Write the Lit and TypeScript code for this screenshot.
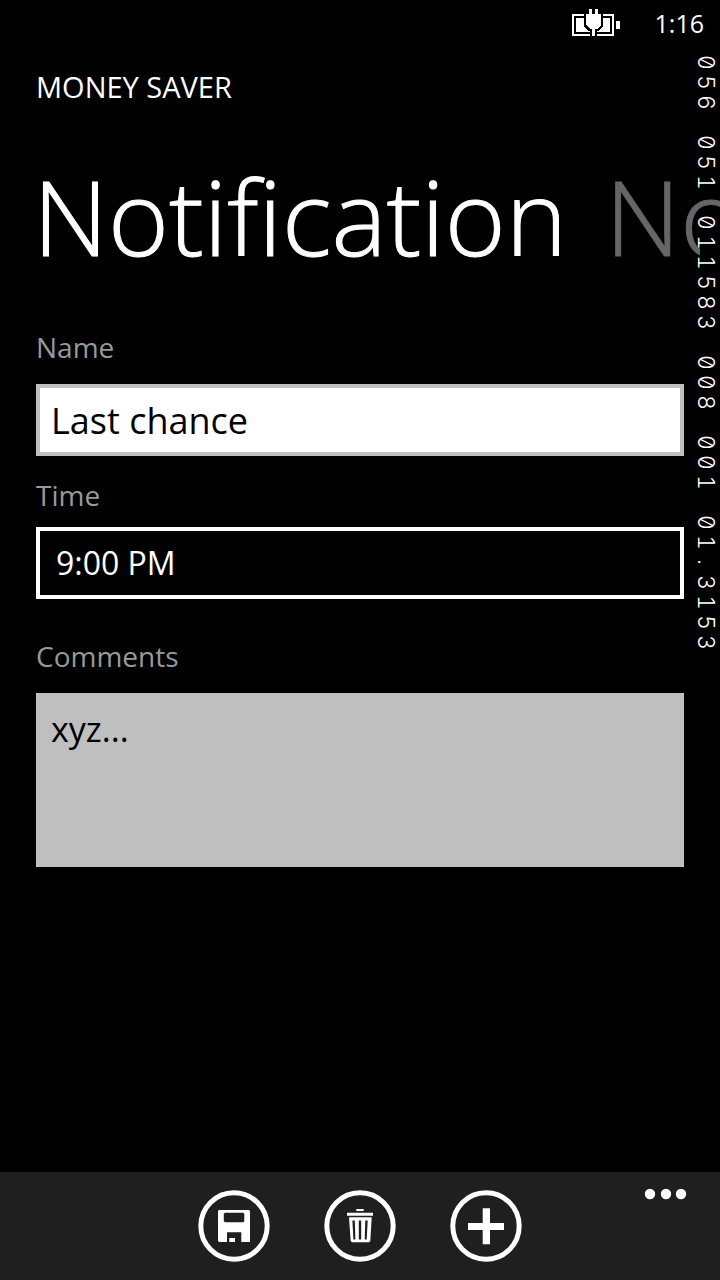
import { LitElement, html, css, svg } from "lit";
import { customElement, state } from "lit/decorators.js";

@customElement("frame-counters")
class FrameCounters extends LitElement {
  static styles = css`
    :host {
      display: flex;
      flex-direction: column;
      gap: 20px;
      font: 300 23px/28px Inter, sans-serif;
      font-feature-settings: "zero", "tnum";
      color: #fff;
    }
    .group {
      display: flex;
      flex-direction: column;
      background: linear-gradient(to left, #000 20px, transparent 20px);
    }
    .digit {
      width: 28px;
      height: 20px;
      writing-mode: vertical-rl;
      text-orientation: sideways;
      text-align: center;
    }
  `;
  private groups = ["056", "051", "011583", "008", "001", "01.3153"];

  render() {
    return this.groups.map(
      (g) => html`<span class="group">${[...g].map((c) => html`<span class="digit">${c}</span>`)}</span>`
    );
  }
}

@customElement("app-root")
class AppRoot extends LitElement {
  static styles = css`
    :host {
      display: flex;
      flex-direction: column;
      position: relative;
      min-height: 100vh;
      overflow: hidden;
      background: #000;
      color: #fff;
      font-family: "Open Sans", "Noto Sans", sans-serif;
    }
    .status {
      display: flex;
      justify-content: flex-end;
      align-items: center;
      gap: 34px;
      height: 48px;
      padding: 0 16px;
      font-size: 25px;
      line-height: 46px;
    }
    .battery {
      display: block;
    }
    .clock {
      align-self: flex-start;
    }
    .app-name {
      margin: 0;
      padding: 19px 36px 0;
      font-size: 29px;
      line-height: 40px;
      font-weight: 400;
    }
    .pivots {
      display: flex;
      gap: 38px;
      padding: 39px 33px 0;
      font-size: 104px;
      line-height: 140px;
      font-weight: 300;
      font-variant-ligatures: none;
      -webkit-text-stroke: 1px currentColor;
      white-space: nowrap;
    }
    .pivot {
      margin: 0;
      font: inherit;
    }
    .next {
      color: #666;
      text-decoration: none;
    }
    .form {
      flex: 1;
      display: flex;
      flex-direction: column;
      padding: 41px 36px 36px;
    }
    .label {
      font-size: 28px;
      line-height: 40px;
      color: #999;
    }
    .field {
      box-sizing: border-box;
      width: 100%;
      height: 72px;
      margin: 17px 0 19px;
      padding: 0 11px;
      border: 4px solid #bfbfbf;
      border-radius: 0;
      outline: none;
      background: #fff;
      color: #000;
      font: 400 36px/48px "Open Sans", sans-serif;
      text-align: left;
    }
    .picker {
      margin: 12px 0 37px;
      padding: 0 16px;
      border-color: #fff;
      background: #000;
      color: #fff;
      font-size: 32px;
    }
    .comments {
      display: block;
      height: 174px;
      margin: 17px 0 0;
      padding: 8px 11px;
      background: #bfbfbf;
      font-size: 34px;
      resize: none;
    }
    .bar {
      display: grid;
      grid-template-columns: 1fr auto 1fr;
      align-items: start;
      padding: 18px 32px;
      background: #1f1f1f;
    }
    .actions {
      grid-column: 2;
      display: flex;
      gap: 54px;
    }
    .action,
    .more {
      display: block;
      padding: 0;
      border: 0;
      background: none;
      color: #fff;
    }
    .more {
      justify-self: end;
    }
    .icon {
      display: block;
      overflow: visible;
    }
    .counters {
      position: absolute;
      top: 52px;
      right: 0;
    }
  `;

  @state() private name = "Last chance";
  @state() private time = "9:00 PM";
  @state() private comments = "xyz...";

  private action(label: string, glyph: unknown) {
    return html`<button class="action" type="button" aria-label=${label}>
      <svg class="icon" width="72" height="72" viewBox="0 0 72 72" fill="currentColor">
        <circle cx="36" cy="36" r="33.2" fill="none" stroke="currentColor" stroke-width="5" />
        ${glyph}
      </svg>
    </button>`;
  }

  render() {
    return html`
      <header class="status">
        <svg class="battery" width="50" height="32" viewBox="0 0 50 32" shape-rendering="crispEdges">
          <path d="M2 7H42V27H2z" fill="none" stroke="#fff" stroke-width="2" />
          <path d="M5 10H39V24H5zM45 13h4v8h-4z" fill="#fff" />
          <path d="M13 4H32V18L28 23H26V29H19V23H17L13 18z" fill="#000" />
          <path d="M18 1h3v5h3V1h3v5h3v11l-4 4h-2v7h-3v-7h-2l-4-4V6h3z" fill="#fff" />
        </svg>
        <time class="clock">1:16</time>
      </header>
      <h2 class="app-name">MONEY SAVER</h2>
      <nav class="pivots">
        <h1 class="pivot">Notification</h1>
        <a class="next" href="#notes">Notes</a>
      </nav>
      <main class="form">
        <label class="label" for="name">Name</label>
        <input class="field" id="name" type="text" .value=${this.name} />
        <label class="label" for="time">Time</label>
        <button class="field picker" id="time" type="button">${this.time}</button>
        <label class="label" for="comments">Comments</label>
        <textarea class="field comments" id="comments" .value=${this.comments}></textarea>
      </main>
      <footer class="bar">
        <div class="actions">
          ${this.action("Save", svg`<path fill-rule="evenodd" d="M21 20h30l1 1v31h-8.700v-9.700H29V52h-8l-1-1V21zM27 22.700h18.300l1 1v7.600l-1 1H27l-1.200-1v-7.600zM31.300 48h5.700v4h-5.700z" />`)}
          ${this.action("Delete", svg`<path fill-rule="evenodd" d="M32.300 19h7.400v2h-7.400zM23 22.700h26v3H23zM25 27.300h22.700L46.300 51l-1.300 1.300H28L26.700 51zM28.400 30.500h2.400l.6 19h-2zM34.800 30.500h2.400v19h-2.400zM41.300 30.500h2.400l-1 19h-2z" />`)}
          ${this.action("Add", svg`<path d="M32.700 18.300H40V33h14v7H40v14.300h-7.300V40H18v-7h14.700z" />`)}
        </div>
        <button class="more" type="button" aria-label="More">
          <svg class="icon" width="44" height="12" viewBox="0 0 44 12" fill="currentColor">
            <circle cx="6" cy="4" r="5.200" /><circle cx="22" cy="4" r="5.200" /><circle cx="37" cy="4" r="5.200" />
          </svg>
        </button>
      </footer>
      <frame-counters class="counters"></frame-counters>
    `;
  }
}
